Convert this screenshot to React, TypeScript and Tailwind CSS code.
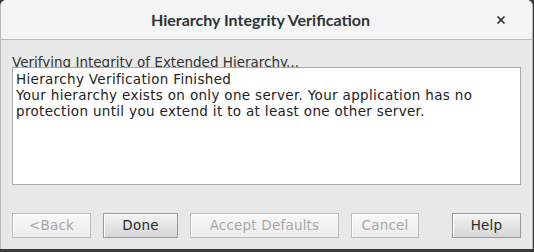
import { X } from 'lucide-react';

const font = { fontFamily: '"DejaVu Sans", sans-serif' };

function Btn({ label, enabled, w }: { label: string; enabled?: boolean; w: string }) {
  return (
    <div
      className={`${w} h-[25px] flex items-center justify-center text-[13.5px] tracking-[0.2px] border ${
        enabled
          ? 'border-[#9a9a9a] bg-gradient-to-b from-[#f4f4f4] to-[#d6d6d6] text-[#2a2a2a] shadow-[inset_1px_1px_0_#ffffff]'
          : 'border-[#bdbdbd] bg-gradient-to-b from-[#f8f8f8] to-[#ececec] text-[#a8a8a8] shadow-[inset_1px_1px_0_#ffffff]'
      }`}
    >
      {label}
    </div>
  );
}

export default function App() {
  return (
    <div className="w-[534px] h-[252px] bg-[#3a3a3a] overflow-hidden" style={font}>
      <div className="w-[533px] h-[249px] rounded-t-[6px] bg-[#e8e8e8] border-l border-r border-[#b8b8b8] flex flex-col overflow-hidden">
        <div className="h-[40px] shrink-0 bg-[#f4f4f4] border-b border-[#bcbcbc] flex items-center relative">
          <div
            className="flex-1 text-center text-[16px] font-bold text-[#2e3436] pr-[12px]"
            style={{ fontFamily: 'Lato, sans-serif' }}
          >
            Hierarchy Integrity Verification
          </div>
          <X className="absolute right-[25px] top-[14px] w-[12px] h-[12px] text-[#2e3436]" strokeWidth={3.5} />
        </div>
        <div className="flex-1 flex flex-col px-[11px]">
          <div className="h-[27px] pt-[14px] text-[13.5px] text-[#333] leading-[17px] overflow-hidden whitespace-nowrap">
            Verifying Integrity of Extended Hierarchy...
          </div>
          <div className="h-[118px] bg-white border border-[#a8a8a8] px-[3px] pt-[3px] text-[13.5px] tracking-[0.33px] leading-[16px] text-[#222] whitespace-nowrap">
            <div>Hierarchy Verification Finished</div>
            <div>Your hierarchy exists on only one server. Your application has no</div>
            <div>protection until you extend it to at least one other server.</div>
          </div>
          <div className="flex items-center mt-[28px] gap-[12px]">
            <Btn label="<Back" w="w-[79px]" />
            <Btn label="Done" enabled w="w-[75px]" />
            <Btn label="Accept Defaults" w="w-[149px]" />
            <Btn label="Cancel" w="w-[68px]" />
            <div className="flex-1" />
            <Btn label="Help" enabled w="w-[69px]" />
          </div>
        </div>
      </div>
    </div>
  );
}
